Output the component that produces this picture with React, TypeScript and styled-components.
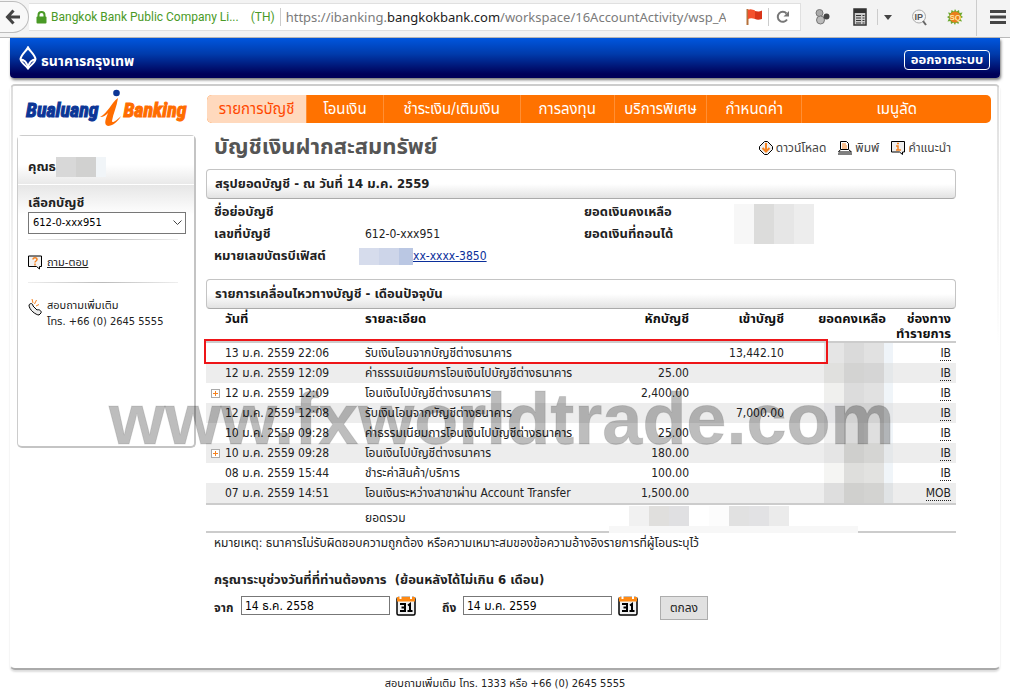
import React from "react";
import styled, { createGlobalStyle } from "styled-components";

const Global = createGlobalStyle`
  *, *::before, *::after { box-sizing: border-box; }
  html, body { margin: 0; background: #fff; overflow-x: hidden; }
  body {
    font-family: "DejaVu Sans Condensed", "Noto Sans Thai", "Noto Sans", sans-serif;
    font-size: 12px;
    line-height: 20px;
    color: #222;
  }
  button, input, select { font: inherit; color: inherit; }
`;

const Page = styled.div`
  position: relative;
`;

/* ---------- browser bar ---------- */

const BrowserBar = styled.div`
  display: flex;
  align-items: center;
  height: 38px;
  padding-bottom: 3px;
  background: #f3f3f3;
  border-bottom: 1px solid #b9b9b9;
  white-space: nowrap;
`;

const BackButton = styled.button`
  flex: none;
  width: 29px;
  height: 32px;
  padding: 0;
  border: 1px solid #bdbdbd;
  border-left: 0;
  border-radius: 0 16px 16px 0;
  background: #f8f8f8;
  display: flex;
  align-items: center;
  justify-content: center;
`;

const UrlField = styled.div`
  flex: 1;
  min-width: 0;
  height: 28px;
  display: flex;
  align-items: center;
  background: #fff;
  border: 1px solid #e0e0e0;
  border-left: 0;
  padding-left: 7px;
`;

const Identity = styled.span`
  display: flex;
  align-items: center;
  gap: 4px;
  color: #4a9a26;
  font-family: Roboto, "Noto Sans", sans-serif;
  font-size: 12px;
`;

const Country = styled.span`
  margin-left: 8px;
`;

const BarLine = styled.span`
  width: 1px;
  height: 18px;
  background: #ccc;
  margin: 0 5px;
`;

const Url = styled.span`
  flex: 1;
  overflow: hidden;
  color: #7b7b7b;
  font-family: "Noto Sans", sans-serif;
  font-size: 13px;
  b { font-weight: 400; color: #222; }
`;

const FieldIcons = styled.div`
  display: flex;
  align-items: center;
  padding: 0 8px 0 20px;
`;

const Extensions = styled.div`
  display: flex;
  align-items: center;
  width: 209px;
  padding-left: 14px;
`;

const IconButton = styled.button<{ $gap?: number }>`
  display: flex;
  padding: 0;
  border: 0;
  background: none;
  margin-right: ${(p) => p.$gap ?? 0}px;
`;

/* ---------- bank header ---------- */

const Banner = styled.header`
  display: flex;
  align-items: center;
  justify-content: space-between;
  height: 40px;
  margin: 0 10px;
  padding: 0 10px 0 8px;
  border-radius: 0 0 4px 4px;
  background: linear-gradient(#0056de, #003bab 40%, #000058 90%);
  box-shadow: 1px 2px 3px #777;
  color: #fff;
`;

const BankName = styled.div`
  display: flex;
  align-items: center;
  gap: 3px;
  font-size: 14px;
  font-weight: 700;
  span { padding-top: 6px; }
`;

const Logout = styled.button`
  width: 86px;
  height: 20px;
  margin-top: 4px;
  padding: 0;
  border: 1px solid #fff;
  border-radius: 4px;
  background: none;
  color: #fff;
  font-size: 13px;
  line-height: 16px;
  font-weight: 700;
`;

const Panel = styled.div`
  margin: 6px 10px 0;
  min-height: 586px;
  padding: 9px 8px 0 6px;
  border: 1px solid transparent;
  border-top: 2px solid #ccc;
  border-bottom: 2px solid #aaa;
  border-radius: 5px;
  background:
    linear-gradient(#ddd, #fff 260px) left / 2px 100% no-repeat,
    linear-gradient(#ddd, #fff 260px) right / 2px 100% no-repeat,
    #fff;
  box-shadow: 0 2px 2px #ddd;
  display: flex;
  align-items: flex-start;
  gap: 10px;
`;

/* ---------- sidebar ---------- */

const Side = styled.aside`
  flex: none;
  width: 179px;
`;

const Brand = styled.h1`
  margin: 0;
  height: 40px;
  padding: 0 0 0 9px;
  display: flex;
  font-family: "Roboto Condensed", "Liberation Sans", sans-serif;
  font-style: italic;
  font-weight: 700;
  font-size: 20px;
  line-height: 30px;
  -webkit-text-stroke: 1px currentColor;
  svg { flex: none; margin: -6px -7px 0 -2px; }
`;

const BrandWord = styled.span<{ $color: string }>`
  color: ${(p) => p.$color};
`;

const Card = styled.div`
  height: 313px;
  border: 1px solid #ccc;
  border-right: 2px solid #c4c4c4;
  border-bottom: 2px solid #c4c4c4;
  border-radius: 5px;
`;

const Customer = styled.div`
  height: 48px;
  display: flex;
  align-items: flex-end;
  padding: 0 0 7px 10px;
  font-size: 13px;
  font-weight: 700;
  background: linear-gradient(#fff 60%, #e9e9e9);
`;

const Account = styled.div`
  display: flex;
  flex-direction: column;
  margin-top: 1px;
  padding: 8px 8px 0 10px;
  background: linear-gradient(#e6e6e6, #fff 30px);
  label { font-size: 13px; font-weight: 700; line-height: 19px; }
`;

const SelectBox = styled.div`
  position: relative;
  svg { position: absolute; right: 4px; top: 8px; pointer-events: none; }
`;

const Select = styled.select`
  appearance: none;
  display: block;
  width: 100%;
  height: 22px;
  padding: 0 4px;
  border: 1px solid #777;
  border-radius: 0;
  background: #fff;
  color: #000;
  font-size: 11px;
`;

const Divider = styled.hr`
  height: 1px;
  border: 0;
  margin: 5px 16px 0 10px;
  background: linear-gradient(90deg, #eee, #bbb 50%, #eee);
`;

const SideItem = styled.div`
  display: flex;
  gap: 5px;
  padding: 15px 0 6px 10px;
  line-height: 16px;
  font-size: 11px;
  a { color: #222; line-height: 16px; }
`;

/* ---------- main column ---------- */

const Main = styled.main`
  flex: 1;
  min-width: 0;
`;

const Nav = styled.nav`
  display: flex;
  height: 28px;
  margin-left: 1px;
  border-radius: 5px;
  overflow: hidden;
  background: #ff7200;
`;

const NavLink = styled.a<{ $share: number; $active?: boolean }>`
  flex: ${(p) => p.$share} 1 0;
  text-align: center;
  text-decoration: none;
  white-space: nowrap;
  font-size: 15px;
  line-height: 28px;
  color: ${(p) => (p.$active ? "#ff4800" : "#fff")};
  background: ${(p) => (p.$active ? "#ffd9bd" : "none")};
  & + & { border-left: 1px solid #ff8f35; }
`;

const Content = styled.div`
  padding-right: 35px;
`;

const TitleRow = styled.div`
  display: flex;
  justify-content: space-between;
  align-items: center;
  height: 46px;
  padding: 2px 5px 0 8px;
`;

const Title = styled.h2`
  margin: 0;
  font-size: 22px;
  color: #555;
`;

const Tools = styled.div`
  display: flex;
  gap: 12px;
  padding-top: 2px;
  a {
    display: flex;
    align-items: center;
    gap: 3px;
    color: #444;
    font-size: 12px;
    line-height: 16px;
    text-decoration: none;
  }
`;

const Section = styled.h3`
  margin: 0;
  height: 30px;
  padding: 0 8px;
  border: 1px solid #c4c4c4;
  border-bottom-color: #aaa;
  border-radius: 4px;
  background: linear-gradient(#fff 50%, #e2e2e2);
  font-size: 13px;
  line-height: 28px;
`;

const Summary = styled.dl`
  margin: 0;
  height: 80px;
  padding: 2px 0 0 8px;
  display: grid;
  grid-template-columns: 145px 225px 1fr;
  grid-auto-rows: 22px;
  line-height: 22px;
  position: relative;
  dt { font-size: 13px; font-weight: 700; white-space: nowrap; }
  dd { margin: 0; padding-left: 6px; }
  a { color: #0b2f9b; }
`;

const CardNumber = styled.dd`
  && { padding: 0; }
  display: flex;
  align-items: center;
`;

const Mosaic = styled.span<{ $h: number }>`
  display: flex;
  justify-content: flex-end;
  height: ${(p) => p.$h}px;
`;

const Tile = styled.span<{ $c: string; $w?: number }>`
  width: ${(p) => p.$w ?? 20}px;
  background: ${(p) => p.$c};
`;

const BalanceMask = styled.div`
  position: absolute;
  left: 528px;
  top: 5px;
`;

const Ledger = styled.div`
  position: relative;
`;

const Highlight = styled.div`
  position: absolute;
  left: -2px;
  right: 128px;
  top: 30px;
  height: 25px;
  border: 2px solid #ee1518;
`;

const TotalMask = styled.div`
  position: absolute;
  right: 98px;
  bottom: 0;
  width: 249px;
  height: 7px;
  background: #f7f7f7;
`;

const SumMask = styled.div`
  position: absolute;
  right: 167px;
  bottom: 7px;
  display: flex;
  gap: 20px;
`;

const Table = styled.table`
  width: 100%;
  table-layout: fixed;
  border-collapse: collapse;
  white-space: nowrap;
  th, td { padding: 0; text-align: left; }
  thead th {
    height: 33px;
    vertical-align: top;
    padding-top: 2px;
    font-size: 13px;
    line-height: 15px;
    color: #111;
    border-bottom: 2px solid #ccc;
  }
  tbody tr { height: 20px; }
  tbody tr:nth-child(even) { background: #ededed; }
  tfoot td { height: 28px; border-top: 2px solid #ccc; border-bottom: 2px solid #ccc; vertical-align: top; }
  abbr { text-decoration: none; border-bottom: 1px dotted #222; }
`;

const Col = styled.col<{ $w?: number }>`
  width: ${(p) => (p.$w ? p.$w + "px" : "auto")};
`;

const Th = styled.th<{ $left?: number; $right?: number }>`
  && {
    padding-left: ${(p) => p.$left ?? 0}px;
    padding-right: ${(p) => p.$right ?? 0}px;
    text-align: ${(p) => (p.$right === undefined ? "left" : "right")};
  }
`;

const Amount = styled.td<{ $right?: number }>`
  && { text-align: right; padding-right: ${(p) => p.$right ?? 0}px; }
`;

const TotalLabel = styled.td`
  && { padding-top: 3px; }
`;

const DateCell = styled.div`
  display: grid;
  grid-template-columns: 14px 1fr;
  align-items: center;
  padding-left: 5px;
`;

const Expand = styled.button`
  width: 9px;
  height: 9px;
  padding: 0;
  border: 1px solid #aaa;
  background: #fff;
  display: flex;
`;

const Note = styled.p`
  margin: 0;
  padding: 0 8px;
`;

const RangeForm = styled.form`
  padding: 16px 8px 0;
`;

const RangeTitle = styled.div`
  font-size: 13px;
  font-weight: 700;
  line-height: 22px;
`;

const RangeRow = styled.div`
  display: flex;
  align-items: flex-start;
  padding-top: 5px;
`;

const RangeLabel = styled.label<{ $w: number }>`
  width: ${(p) => p.$w}px;
  line-height: 24px;
  font-weight: 700;
`;

const DateInput = styled.input`
  width: 149px;
  height: 19px;
  padding: 0 3px;
  border: 1px solid #777;
  color: #000;
  margin-right: 6px;
`;

const Submit = styled.button`
  width: 48px;
  height: 24px;
  padding: 0;
  border: 1px solid #adadad;
  background: #e1e1e1;
  line-height: 20px;
`;

const Footer = styled.footer`
  margin-top: 8px;
  text-align: center;
  font-size: 11px;
  line-height: 12px;
`;

const Watermark = styled.div`
  position: absolute;
  left: 109px;
  top: 379px;
  font: 700 72px/80px "Liberation Sans", sans-serif;
  color: rgba(0, 0, 0, 0.26);
  -webkit-text-stroke: 1px rgba(0, 0, 0, 0.1);
  pointer-events: none;
  white-space: nowrap;
`;

/* ---------- drawings ---------- */

const Calendar = () => (
  <svg width="20" height="20" viewBox="0 0 20 20">
    <rect x="1" y="1.500" width="18" height="17.500" rx="1.500" fill="#f2f2f2" stroke="#000" strokeWidth="1.500" />
    <path d="M1 1h18v4.500H1z" fill="#ff8a14" />
    <path d="M4.500 0v3M15 0v3" stroke="#fff" strokeWidth="2" />
    <path d="M4 8h5v7H4M5.500 11.500H9M12 9.500l2-1.500v7M11.500 15h5" fill="none" stroke="#000" strokeWidth="2" />
  </svg>
);

const rows = [
  { d: "13 ม.ค. 2559 22:06", t: "รับเงินโอนจากบัญชีต่างธนาคาร", out: "", in: "13,442.10", ch: "IB", m: ["#e5e5e5", "#dadada", "#e1e1e1", "#eff4f9"] },
  { d: "12 ม.ค. 2559 12:09", t: "ค่าธรรมเนียมการโอนเงินไปบัญชีต่างธนาคาร", out: "25.00", in: "", ch: "IB", m: ["#e0e0de", "#d3d3d2", "#d5d5d5", "#e5e8ea"] },
  { d: "12 ม.ค. 2559 12:09", t: "โอนเงินไปบัญชีต่างธนาคาร", out: "2,400.00", in: "", ch: "IB", x: true, m: ["#f0f0ee", "#dcdcdc", "#e1e1e1", "#f0f5f9"] },
  { d: "12 ม.ค. 2559 12:08", t: "รับเงินโอนจากบัญชีต่างธนาคาร", out: "", in: "7,000.00", ch: "IB", m: ["#e3e3e5", "#d2d2d2", "#d2d2d2", "#e5e7e9"] },
  { d: "10 ม.ค. 2559 09:28", t: "ค่าธรรมเนียมการโอนเงินไปบัญชีต่างธนาคาร", out: "25.00", in: "", ch: "IB", m: ["#f1f1f1", "#dadada", "#dfdfdf", "#f0f5f9"] },
  { d: "10 ม.ค. 2559 09:28", t: "โอนเงินไปบัญชีต่างธนาคาร", out: "180.00", in: "", ch: "IB", x: true, m: ["#e5e5e5", "#cfcfcd", "#d5d5d3", "#e5e8ea"] },
  { d: "08 ม.ค. 2559 15:44", t: "ชำระค่าสินค้า/บริการ", out: "100.00", in: "", ch: "IB", m: ["#f5f5f3", "#dededc", "#e2e2e0", "#f0f5f9"] },
  { d: "07 ม.ค. 2559 14:51", t: "โอนเงินระหว่างสาขาผ่าน Account Transfer", out: "1,500.00", in: "", ch: "MOB", m: ["#dedede", "#d0d0ce", "#d3d3d1", "#e0e3e5"] },
];

const nav: [string, number][] = [
  ["รายการบัญชี", 100],
  ["โอนเงิน", 76],
  ["ชำระเงิน/เติมเงิน", 137],
  ["การลงทุน", 94],
  ["บริการพิเศษ", 92],
  ["กำหนดค่า", 95],
  ["เมนูลัด", 190],
];

export default function App() {
  return (
    <Page>
      <Global />
      <BrowserBar>
        <BackButton aria-label="Back">
          <svg width="18" height="16" viewBox="0 0 18 16">
            <path d="M8.500 1.500L2.500 8l6 6.500M3 8H15" fill="none" stroke="#444" strokeWidth="3" />
          </svg>
        </BackButton>
        <UrlField>
          <Identity>
            <svg width="11" height="13" viewBox="0 0 11 13">
              <path d="M2.500 6V4a3 3 0 0 1 6 0v2" fill="none" stroke="#4a9a26" strokeWidth="2" />
              <rect x="0.500" y="5.500" width="10" height="7" rx="1" fill="#4a9a26" />
            </svg>
            Bangkok Bank Public Company Li...
            <Country>(TH)</Country>
          </Identity>
          <BarLine />
          <Url>
            https://ibanking.<b>bangkokbank.com</b>/workspace/16AccountActivity/wsp_A
          </Url>
          <FieldIcons>
            <svg width="17" height="18" viewBox="0 0 17 18">
              <path d="M1.500 1v16" stroke="#b5713a" strokeWidth="2" />
              <path d="M2 2c3-1.500 5 0 7 .500V11c-2-.500-4-1.500-7 0z" fill="#f4502c" />
              <path d="M9 3c2 .500 4 1 7-.500V11c-3 1-5 1-7 0z" fill="#d93418" />
            </svg>
            <BarLine />
            <svg width="18" height="16" viewBox="0 0 18 16">
              <path d="M12.500 4.500A5 5 0 1 0 13 10.500" fill="none" stroke="#777" strokeWidth="2" />
              <path d="M15 2v5.500H9.500z" fill="#777" />
            </svg>
          </FieldIcons>
        </UrlField>
        <Extensions>
          <IconButton $gap={23} aria-label="Containers">
            <svg width="15" height="16" viewBox="0 0 15 16">
              <circle cx="4.500" cy="4" r="3.500" fill="#aaa" stroke="#777" />
              <circle cx="5.500" cy="11" r="4" fill="#bbb" stroke="#777" />
              <circle cx="11.500" cy="7.500" r="3" fill="#444" />
            </svg>
          </IconButton>
          <IconButton $gap={10} aria-label="Notes">
            <svg width="14" height="18" viewBox="0 0 14 18">
              <path d="M1 1h12v16H1z" fill="#ccc" stroke="#333" strokeWidth="1.500" />
              <path d="M1 1h12v4H1z" fill="#333" />
              <path d="M3 7.500h5M3 10h5M3 12.500h5M3 15h5M9.500 7.500h2M9.500 10h2M9.500 12.500h2M9.500 15h2" stroke="#333" />
            </svg>
          </IconButton>
          <svg width="7" height="16" viewBox="0 0 7 16">
            <path d="M.5 0v16" stroke="#ccc" />
          </svg>
          <IconButton $gap={20} aria-label="More">
            <svg width="8" height="5" viewBox="0 0 8 5">
              <path d="M0 0h8L4 5z" fill="#444" />
            </svg>
          </IconButton>
          <IconButton $gap={19} aria-label="IP lookup">
            <svg width="16" height="17" viewBox="0 0 16 17">
              <circle cx="7" cy="7.500" r="6.500" fill="#f5f5f5" stroke="#aaa" />
              <path d="M11 12l3 4" stroke="#666" strokeWidth="2" />
              <text x="2.500" y="11" fontFamily="Liberation Sans" fontWeight="700" fontSize="9" fill="#555">IP</text>
            </svg>
          </IconButton>
          <IconButton $gap={13} aria-label="SQ">
            <svg width="16" height="16" viewBox="0 0 16 16">
              <path d="M8 0l1.500 2.500L12 1l.5 3 3-.5-1.500 3L16 8l-2.500 1.500 1.500 3-3-.5-.5 3-2.500-1.500L8 16l-1.500-2.500L4 15l-.5-3-3 .5L2 9.500 0 8l2.500-1.500L1 3.500l3 .5.5-3 2.500 1.500z" fill="#6aa82e" />
              <circle cx="8" cy="8" r="5.500" fill="#ea7f1c" />
              <text x="2.500" y="11" fontFamily="Liberation Sans" fontWeight="700" fontSize="8" fill="#ffe9a8">SQ</text>
            </svg>
          </IconButton>
          <svg width="14" height="37" viewBox="0 0 14 37">
            <path d="M.5 0v37" stroke="#ccc" />
          </svg>
          <IconButton aria-label="Menu">
            <svg width="16" height="14" viewBox="0 0 16 14">
              <path d="M0 1.500h16M0 7h16M0 12.500h16" stroke="#444" strokeWidth="3" />
            </svg>
          </IconButton>
        </Extensions>
      </BrowserBar>

      <Banner>
        <BankName>
          <svg width="20" height="25" viewBox="0 0 20 25">
            <path d="M10 1.500c1.500 3.500 6.500 6.500 7.500 11.500 0 3-4 5.500-7.500 9.500C6.500 18.500 2.500 16 2.500 13 3.500 8 8.500 5 10 1.500z" fill="none" stroke="#fff" strokeWidth="2" />
            <path d="M2 13.500c4 0 7 3 8 8 1-5 4-8 8-8" fill="none" stroke="#fff" strokeWidth="2" />
          </svg>
          <span>ธนาคารกรุงเทพ</span>
        </BankName>
        <Logout>ออกจากระบบ</Logout>
      </Banner>

      <Panel>
        <Side>
          <Brand>
            <BrandWord $color="#0c3696">Bualuang</BrandWord>
            <svg width="34" height="40" viewBox="0 0 34 40">
              <circle cx="20.500" cy="4" r="3.300" fill="#0c3696" />
              <path d="M4 28C12 24 15 14 22 9c-1 8-5 16-6 23 0 3 5-1 9-5-3 6-9 10-13 10-5-1-2-8 0-13-2 2-4 4-8 4z" fill="#ff6d00" />
            </svg>
            <BrandWord $color="#ff6d00">Banking</BrandWord>
          </Brand>
          <Card>
            <Customer>
              คุณธ
              <Mosaic $h={20}>
                <Tile $c="#d8d8d8" />
                <Tile $c="#d1d1d0" />
                <Tile $c="#f1f5f8" $w={10} />
              </Mosaic>
            </Customer>
            <Account>
              <label htmlFor="account">เลือกบัญชี</label>
              <SelectBox>
                <Select id="account">
                  <option>612-0-xxx951</option>
                </Select>
                <svg width="9" height="6" viewBox="0 0 9 6">
                  <path d="M.5.5l4 4 4-4" fill="none" stroke="#444" />
                </svg>
              </SelectBox>
            </Account>
            <Divider />
            <SideItem>
              <svg width="14" height="15" viewBox="0 0 14 15">
                <path d="M.5 1h13v10.500h-2v2.500l-3-2.500h-8z" fill="#f2f2f2" stroke="#000" />
                <path d="M5 4.500c0-2.500 4-2.500 4 0 0 1.500-2 1.500-2 3M7 8.500v2" fill="none" stroke="#f58220" strokeWidth="1.500" />
              </svg>
              <a href="#faq">ถาม-ตอบ</a>
            </SideItem>
            <Divider />
            <SideItem>
              <svg width="14" height="19" viewBox="0 0 14 19">
                <path d="M1 7c1-2 4-2 4 1l4 4c2-1 5 1 4 3l-2 2c-3 0-10-5-10-10z" fill="#eee" stroke="#000" />
                <path d="M4 1l1 4M8.500 2L6.500 6M11 6.500L8 8" stroke="#f58220" />
              </svg>
              <div>
                สอบถามเพิ่มเติม
                <br />
                โทร. +66 (0) 2645 5555
              </div>
            </SideItem>
          </Card>
        </Side>

        <Main>
          <Nav>
            {nav.map(([label, share], i) => (
              <NavLink key={label} href="#menu" $share={share} $active={i === 0}>
                {label}
              </NavLink>
            ))}
          </Nav>
          <Content>
            <TitleRow>
              <Title>บัญชีเงินฝากสะสมทรัพย์</Title>
              <Tools>
                <a href="#download">
                  <svg width="14" height="14" viewBox="0 0 14 14">
                    <path d="M5.500 .5h3L13.500 5.500v3L8.500 13.500h-3L.5 8.500v-3z" fill="#eee" stroke="#000" />
                    <path d="M7 2v9M3.500 7L7 10.500 10.500 7" fill="none" stroke="#f58220" strokeWidth="2" />
                  </svg>
                  ดาวน์โหลด
                </a>
                <a href="#print">
                  <svg width="14" height="14" viewBox="0 0 14 14">
                    <path d="M2.500 8V.5h6l2 2V8M2.500 8.500h8l3 2.500H.5zM0 13h14" fill="#fff" stroke="#000" />
                    <path d="M4 3h4M4 5h5M4 7h5" stroke="#f58220" />
                  </svg>
                  พิมพ์
                </a>
                <a href="#help">
                  <svg width="14" height="14" viewBox="0 0 14 14">
                    <path d="M.5.5h13v10.500h-2v2.500L8.500 11h-8z" fill="#eee" stroke="#000" />
                    <path d="M5 5h2v4M5 9h5M6 2.500h2" fill="none" stroke="#f58220" strokeWidth="1.500" />
                  </svg>
                  คำแนะนำ
                </a>
              </Tools>
            </TitleRow>

            <Section>สรุปยอดบัญชี - ณ วันที่ 14 ม.ค. 2559</Section>
            <Summary>
              <dt>ชื่อย่อบัญชี</dt>
              <dd />
              <dt>ยอดเงินคงเหลือ</dt>
              <dt>เลขที่บัญชี</dt>
              <dd>612-0-xxx951</dd>
              <dt>ยอดเงินที่ถอนได้</dt>
              <dt>หมายเลขบัตรบีเฟิสต์</dt>
              <CardNumber>
                <Mosaic $h={17}>
                  <Tile $c="#d6dcec" />
                  <Tile $c="#cdd5e9" />
                  <Tile $c="#bac7e3" $w={14} />
                </Mosaic>
                <a href="#card">xx-xxxx-3850</a>
              </CardNumber>
              <BalanceMask>
                <Mosaic $h={40}>
                  <Tile $c="#f7f7f7" />
                  <Tile $c="#dcdcdb" />
                  <Tile $c="#e6e6e6" />
                  <Tile $c="#ededed" />
                </Mosaic>
              </BalanceMask>
            </Summary>

            <Section>รายการเคลื่อนไหวทางบัญชี - เดือนปัจจุบัน</Section>
            <Ledger>
              <Table>
                <colgroup>
                  <Col $w={159} />
                  <Col />
                  <Col $w={100} />
                  <Col $w={95} />
                  <Col $w={109} />
                  <Col $w={63} />
                </colgroup>
                <thead>
                  <tr>
                    <Th $left={19}>วันที่</Th>
                    <Th>รายละเอียด</Th>
                    <Th $right={0}>หักบัญชี</Th>
                    <Th $right={0}>เข้าบัญชี</Th>
                    <Th $right={7}>ยอดคงเหลือ</Th>
                    <Th $right={5}>
                      ช่องทาง
                      <br />
                      ทำรายการ
                    </Th>
                  </tr>
                </thead>
                <tbody>
                  {rows.map((r) => (
                    <tr key={r.d + r.t}>
                      <td>
                        <DateCell>
                          {r.x ? (
                            <Expand type="button" aria-label="Expand">
                              <svg width="7" height="7" viewBox="0 0 7 7">
                                <path d="M1 3.500h5M3.500 1v5" stroke="#f58220" />
                              </svg>
                            </Expand>
                          ) : (
                            <span />
                          )}
                          {r.d}
                        </DateCell>
                      </td>
                      <td>{r.t}</td>
                      <Amount>{r.out}</Amount>
                      <Amount>{r.in}</Amount>
                      <td>
                        <Mosaic $h={20}>
                          {r.m.map((c, i) => (
                            <Tile key={i} $c={c} $w={i === 3 ? 9 : 20} />
                          ))}
                        </Mosaic>
                      </td>
                      <Amount $right={5}>
                        <abbr>{r.ch}</abbr>
                      </Amount>
                    </tr>
                  ))}
                </tbody>
                <tfoot>
                  <tr>
                    <td />
                    <TotalLabel>ยอดรวม</TotalLabel>
                    <td />
                    <td />
                    <td />
                    <td />
                  </tr>
                </tfoot>
              </Table>
              <Highlight />
              <SumMask>
                <Mosaic $h={20}>
                  <Tile $c="#f1f1f1" />
                  <Tile $c="#e0dfdd" />
                  <Tile $c="#e0e0e2" />
                </Mosaic>
                <Mosaic $h={20}>
                  <Tile $c="#fcfcfc" />
                  <Tile $c="#e1e1e1" />
                  <Tile $c="#e2e2e4" />
                  <Tile $c="#ebebeb" />
                </Mosaic>
              </SumMask>
              <TotalMask />
            </Ledger>
            <Note>หมายเหตุ: ธนาคารไม่รับผิดชอบความถูกต้อง หรือความเหมาะสมของข้อความอ้างอิงรายการที่ผู้โอนระบุไว้</Note>

            <RangeForm>
              <RangeTitle>กรุณาระบุช่วงวันที่ที่ท่านต้องการ &nbsp;(ย้อนหลังได้ไม่เกิน 6 เดือน)</RangeTitle>
              <RangeRow>
                <RangeLabel $w={27} htmlFor="from">จาก</RangeLabel>
                <DateInput id="from" defaultValue="14 ธ.ค. 2558" />
                <IconButton type="button" $gap={26} aria-label="Pick start date">
                  <Calendar />
                </IconButton>
                <RangeLabel $w={21} htmlFor="to">ถึง</RangeLabel>
                <DateInput id="to" defaultValue="14 ม.ค. 2559" />
                <IconButton type="button" $gap={22} aria-label="Pick end date">
                  <Calendar />
                </IconButton>
                <Submit type="button">ตกลง</Submit>
              </RangeRow>
            </RangeForm>
          </Content>
        </Main>
      </Panel>
      <Footer>สอบถามเพิ่มเติม โทร. 1333 หรือ +66 (0) 2645 5555</Footer>
      <Watermark>www.fxworldtrade.com</Watermark>
    </Page>
  );
}
